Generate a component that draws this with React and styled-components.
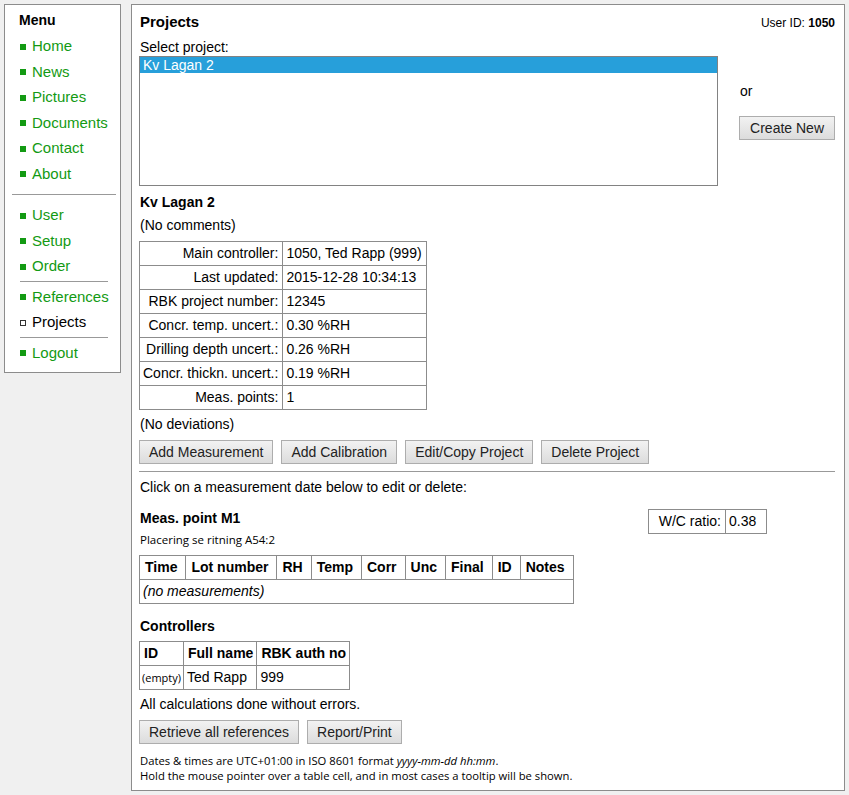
import React from 'react';
import styled, { createGlobalStyle } from 'styled-components';

const GlobalStyle = createGlobalStyle`
  html, body {
    margin: 0;
    padding: 0;
    background: #f0f0f0;
  }
  body {
    font-family: "Liberation Sans", Arial, sans-serif;
    font-size: 14px;
    color: #000;
  }
`;

const Page = styled.div`
  display: flex;
  align-items: flex-start;
  gap: 10px;
  padding: 4px;
`;

const MenuBox = styled.nav`
  flex: none;
  width: 115px;
  background: #fff;
  border: 1px solid #8c8c8c;
  padding: 7px 0 7px;
  box-sizing: content-box;
`;

const MenuTitle = styled.div`
  font-weight: bold;
  font-size: 14px;
  padding-left: 14px;
  margin-bottom: 5px;
`;

const MenuList = styled.ul`
  list-style: none;
  margin: 0;
  padding: 0;
`;

const MenuItem = styled.li`
  display: flex;
  align-items: center;
  height: 25.5px;
  padding-left: 15px;
  font-size: 15px;
  color: ${p => (p.$active ? '#000' : '#139a13')};

  &::before {
    content: '';
    display: inline-block;
    width: 6px;
    height: 6px;
    margin-right: 6px;
    margin-top: 2px;
    box-sizing: border-box;
    background: ${p => (p.$active ? '#fff' : '#139a13')};
    border: 1px solid ${p => (p.$active ? '#333' : '#139a13')};
  }
`;

const MenuRule = styled.hr`
  border: 0;
  border-top: 1px solid #999;
  margin: ${p => (p.$wide ? '8px 4px 7px 7px' : '2px 12px 2px 15px')};
`;

const Main = styled.main`
  flex: none;
  width: 696px;
  background: #fff;
  border: 1px solid #8c8c8c;
  padding: 8px 9px 7px 7px;
`;

const TitleRow = styled.div`
  display: flex;
  justify-content: space-between;
  align-items: baseline;
`;

const Title = styled.h2`
  margin: 0;
  padding-left: 1px;
  font-size: 15px;
  font-weight: bold;
  line-height: 18px;
`;

const UserId = styled.span`
  font-size: 12px;
`;

const Label = styled.div`
  margin-top: ${p => p.$top || 0}px;
  line-height: 17px;
  padding-left: 1px;
`;

const SelectRow = styled.div`
  display: flex;
  align-items: flex-start;
`;

const ListBox = styled.div`
  width: 578px;
  height: 128px;
  border: 1px solid #828282;
  background: #fff;
`;

const ListOption = styled.div`
  height: 16px;
  line-height: 16px;
  padding-left: 3px;
  font-size: 14px;
  background: ${p => (p.$selected ? '#279fda' : 'transparent')};
  color: ${p => (p.$selected ? '#fff' : '#000')};
`;

const SideCol = styled.div`
  margin-left: 21px;
  padding-top: 27px;
  display: flex;
  flex-direction: column;
  align-items: flex-start;
`;

const Button = styled.button`
  font-family: "Liberation Sans", Arial, sans-serif;
  font-size: 14px;
  color: #222;
  height: 24px;
  padding: 0 ${p => p.$pad || 9}px;
  white-space: nowrap;
  border: 1px solid #adadad;
  border-radius: 0;
  background: linear-gradient(#f2f2f2, #dcdcdc);
  cursor: pointer;
`;

const ButtonRow = styled.div`
  display: flex;
  gap: ${p => p.$gap || 8}px;
  margin-top: ${p => p.$top || 0}px;
`;

const Heading = styled.h3`
  margin: ${p => p.$top || 0}px 0 0;
  padding-left: 1px;
  font-size: 14px;
  font-weight: bold;
  line-height: 18px;
`;

const Table = styled.table`
  border-collapse: collapse;
  margin-top: ${p => p.$top || 0}px;
  font-size: 14px;

  td, th {
    border: 1px solid #8c8c8c;
    padding: 3px 4px 3px 3px;
    line-height: 17px;
    white-space: nowrap;
  }

  th {
    text-align: left;
    font-weight: bold;
    padding: 3px 3px 3px 4px;
  }
`;

const KeyCell = styled.td`
  text-align: right;
  min-width: ${p => p.$min || 0}px;
  box-sizing: border-box;
`;

const ValueCell = styled.td`
  min-width: ${p => p.$min || 0}px;
  box-sizing: border-box;
`;

const MeasHead = styled.th`
  padding: 3px 8px 3px 5px !important;
`;

const SmallCell = styled.td`
  font-family: "Open Sans", "Noto Sans", sans-serif;
  font-size: 11px;
  padding: 3px 2px !important;
`;

const Divider = styled.hr`
  border: 0;
  border-top: 1px solid #999;
  margin: 7px 0 0;
`;

const PointRow = styled.div`
  display: flex;
  align-items: flex-start;
  margin-top: 13px;
`;

const PointInfo = styled.div`
  width: 509px;
`;

const Note = styled.div`
  font-family: "Open Sans", "Noto Sans", sans-serif;
  font-size: ${p => p.$size || 11.5}px;
  line-height: 15px;
  margin-top: ${p => p.$top || 0}px;
  padding-left: 1px;
`;

const menu1 = ['Home', 'News', 'Pictures', 'Documents', 'Contact', 'About'];

const projectInfo = [
  ['Main controller:', '1050, Ted Rapp (999)'],
  ['Last updated:', '2015-12-28 10:34:13'],
  ['RBK project number:', '12345'],
  ['Concr. temp. uncert.:', '0.30 %RH'],
  ['Drilling depth uncert.:', '0.26 %RH'],
  ['Concr. thickn. uncert.:', '0.19 %RH'],
  ['Meas. points:', '1'],
];

const measCols = ['Time', 'Lot number', 'RH', 'Temp', 'Corr', 'Unc', 'Final', 'ID', 'Notes'];

export default function App() {
  return (
    <>
      <GlobalStyle />
      <Page>
        <MenuBox>
          <MenuTitle>Menu</MenuTitle>
          <MenuList>
            {menu1.map(m => <MenuItem key={m}>{m}</MenuItem>)}
          </MenuList>
          <MenuRule $wide />
          <MenuList>
            <MenuItem>User</MenuItem>
            <MenuItem>Setup</MenuItem>
            <MenuItem>Order</MenuItem>
          </MenuList>
          <MenuRule />
          <MenuList>
            <MenuItem>References</MenuItem>
            <MenuItem $active>Projects</MenuItem>
          </MenuList>
          <MenuRule />
          <MenuList>
            <MenuItem>Logout</MenuItem>
          </MenuList>
        </MenuBox>

        <Main>
          <TitleRow>
            <Title>Projects</Title>
            <UserId>User ID: <b>1050</b></UserId>
          </TitleRow>
          <Label $top={8}>Select project:</Label>
          <SelectRow>
            <ListBox>
              <ListOption $selected>Kv Lagan 2</ListOption>
            </ListBox>
            <SideCol>
              <Label>or</Label>
              <ButtonRow $top={16}>
                <Button $pad={10}>Create New</Button>
              </ButtonRow>
            </SideCol>
          </SelectRow>

          <Heading $top={7}>Kv Lagan 2</Heading>
          <Label $top={6}>(No comments)</Label>
          <Table $top={7}>
            <tbody>
              {projectInfo.map(([k, v]) => (
                <tr key={k}>
                  <KeyCell>{k}</KeyCell>
                  <td>{v}</td>
                </tr>
              ))}
            </tbody>
          </Table>
          <Label $top={6}>(No deviations)</Label>
          <ButtonRow $top={7}>
            <Button>Add Measurement</Button>
            <Button>Add Calibration</Button>
            <Button>Edit/Copy Project</Button>
            <Button>Delete Project</Button>
          </ButtonRow>
          <Divider />
          <Label $top={7}>Click on a measurement date below to edit or delete:</Label>

          <PointRow>
            <PointInfo>
              <Heading>Meas. point M1</Heading>
              <Note $top={5}>Placering se ritning A54:2</Note>
            </PointInfo>
            <Table>
              <tbody>
                <tr>
                  <KeyCell $min={77}>W/C ratio:</KeyCell>
                  <ValueCell $min={41}>0.38</ValueCell>
                </tr>
              </tbody>
            </Table>
          </PointRow>

          <Table $top={8}>
            <thead>
              <tr>
                {measCols.map(c => <MeasHead key={c}>{c}</MeasHead>)}
              </tr>
            </thead>
            <tbody>
              <tr>
                <td colSpan={measCols.length}><i>(no measurements)</i></td>
              </tr>
            </tbody>
          </Table>

          <Heading $top={13}>Controllers</Heading>
          <Table $top={6}>
            <thead>
              <tr>
                <th>ID</th>
                <th>Full name</th>
                <th>RBK auth no</th>
              </tr>
            </thead>
            <tbody>
              <tr>
                <SmallCell>(empty)</SmallCell>
                <td>Ted Rapp</td>
                <td>999</td>
              </tr>
            </tbody>
          </Table>
          <Label $top={6}>All calculations done without errors.</Label>
          <ButtonRow $top={7}>
            <Button>Retrieve all references</Button>
            <Button>Report/Print</Button>
          </ButtonRow>
          <Note $top={9} $size={11.25}>
            Dates &amp; times are UTC+01:00 in ISO 8601 format <i>yyyy-mm-dd hh:mm</i>.
          </Note>
          <Note $size={11.25}>Hold the mouse pointer over a table cell, and in most cases a tooltip will be shown.</Note>
        </Main>
      </Page>
    </>
  );
}
